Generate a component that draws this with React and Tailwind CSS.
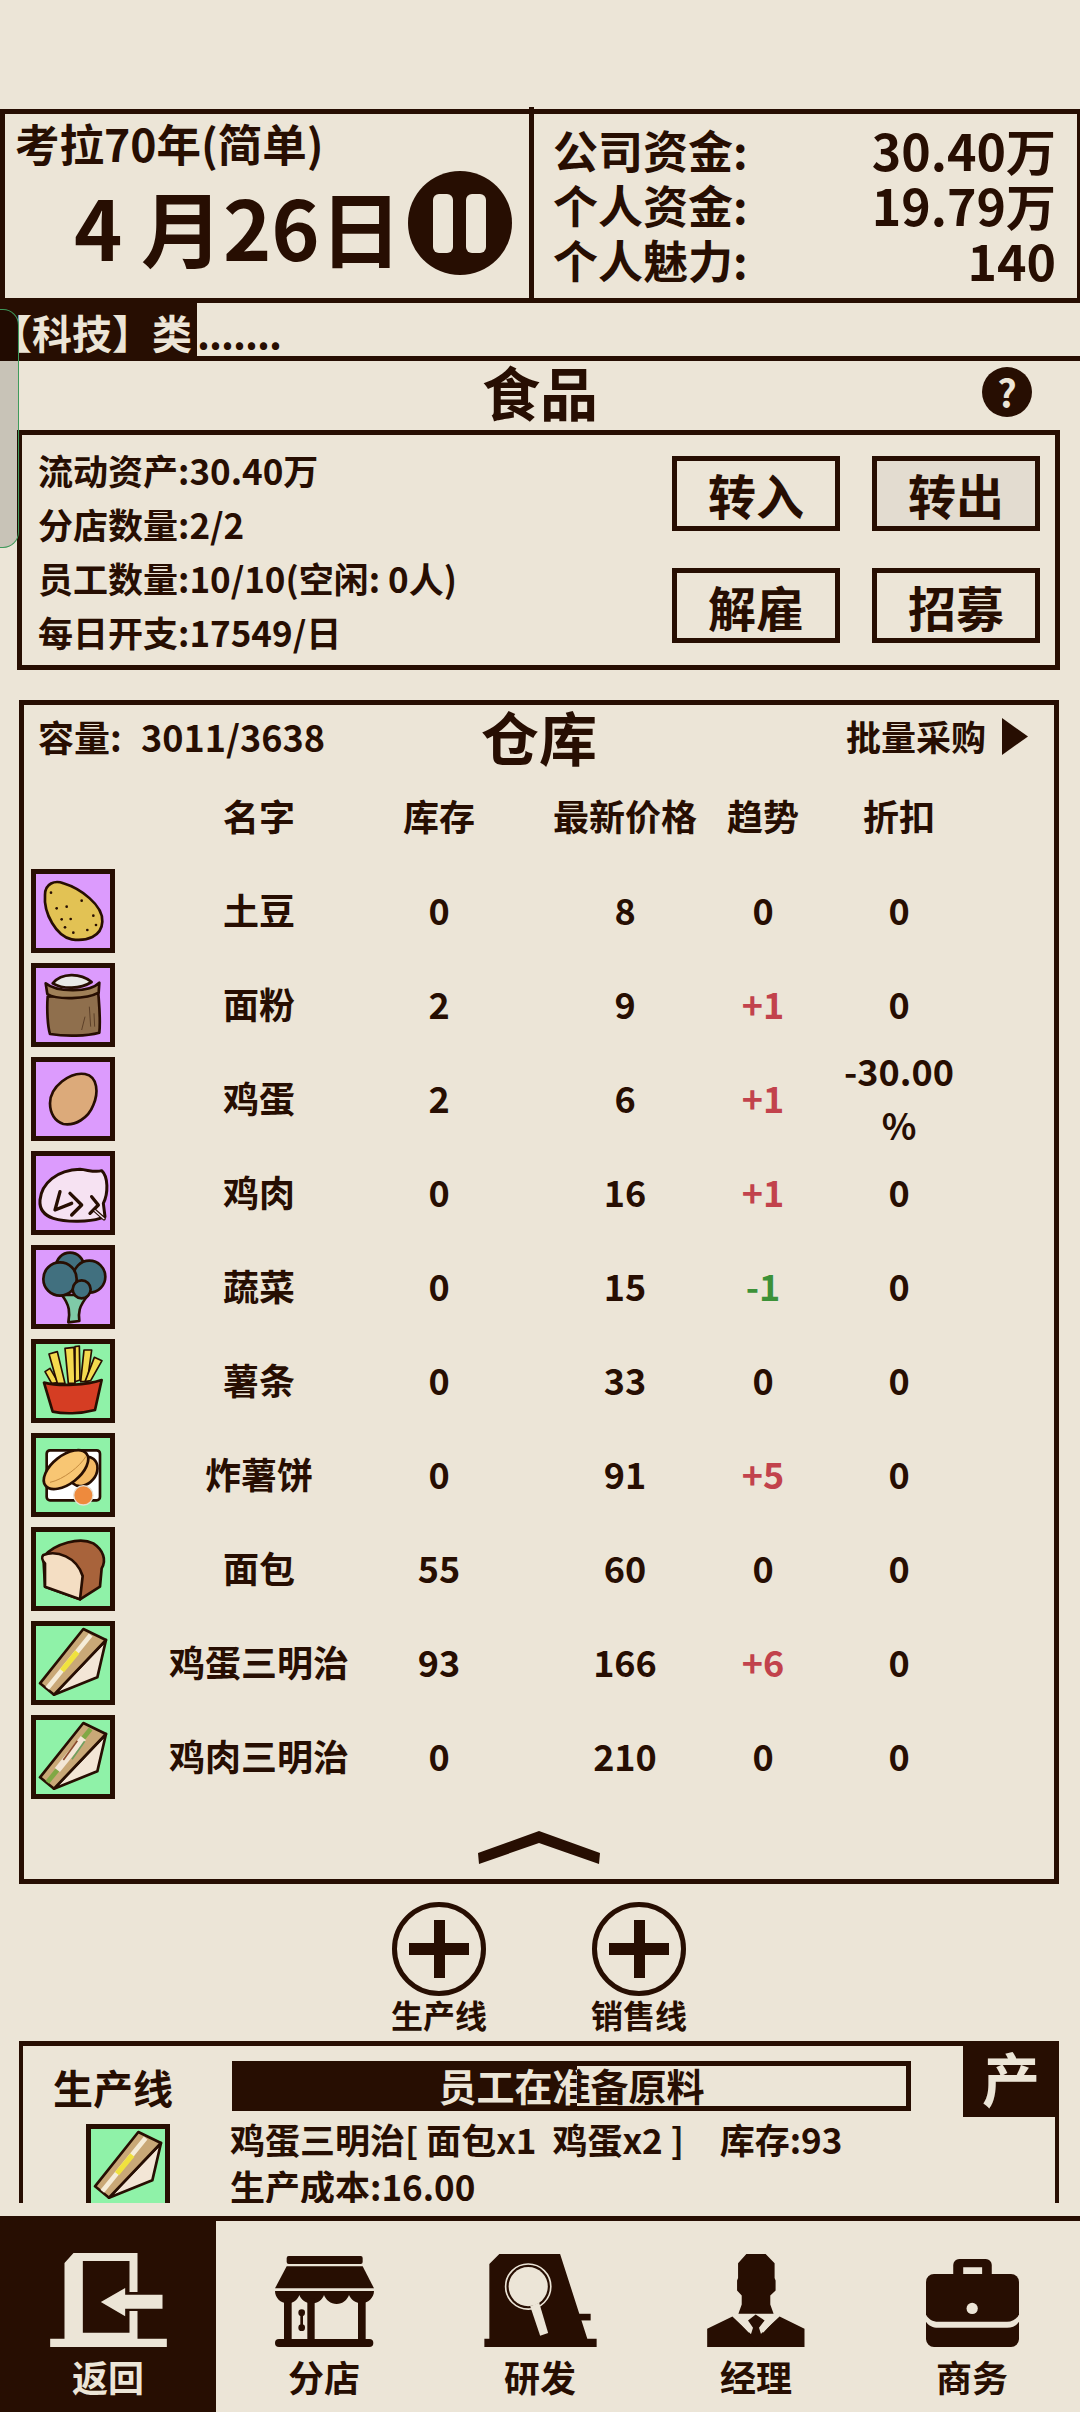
import React from 'react';

const PURPLE = 'bg-[#dc9bfd]';
const GREEN = 'bg-[#8ff2a8]';
const line = { stroke: '#270e02', strokeWidth: 8, strokeLinejoin: 'round', strokeLinecap: 'round' };

const Potato = () => (
  <svg viewBox="108 72 222 222" className="w-full h-full">
    <path d="M135 135C135 100 165 90 190 100C240 115 310 165 307 215C305 260 260 275 215 268C170 260 130 190 135 135Z" fill="#e2c254" {...line} />
    {[[153, 128], [170, 175], [200, 170], [245, 152], [185, 208], [212, 207], [280, 197], [288, 225], [195, 232], [220, 248], [262, 240]].map(([x, y]) => (
      <circle key={`${x}-${y}`} cx={x} cy={y} r="4" fill="#270e02" />
    ))}
  </svg>
);

const Flour = () => (
  <svg viewBox="108 354 222 222" className="w-full h-full">
    <path d="M143 440C140 480 143 530 150 552C200 560 260 558 298 548C302 510 298 470 295 430Z" fill="#8f6f4d" {...line} />
    <path d="M158 400C185 368 240 368 275 396C240 418 190 418 158 400Z" fill="#e9e9e6" {...line} />
    <path d="M137 400C170 428 270 428 298 398L296 428C260 448 170 450 142 432Z" fill="#a08058" {...line} />
    <path d="M268 470L272 530M255 500L245 540M282 490L284 530" stroke="#5d4029" strokeWidth="3" fill="none" />
  </svg>
);

const Egg = () => (
  <svg viewBox="108 636 222 222" className="w-full h-full">
    <path d="M150 760C150 710 210 665 255 672C295 680 295 730 280 765C265 805 225 828 190 822C165 815 150 790 150 760Z" fill="#dcaa7a" {...line} />
  </svg>
);

const Chicken = () => (
  <svg viewBox="108 918 222 222" className="w-full h-full">
    <path d="M120 1050C125 1000 170 960 240 958C265 960 285 968 305 962C325 980 325 1030 310 1060L315 1100L300 1105C270 1115 200 1118 160 1105C130 1095 118 1075 120 1050Z" fill="#f6e2f2" {...line} strokeWidth="9" />
    <path d="M180 1025L165 1080L215 1060M210 1030L245 1065L215 1095M275 1040L295 1065L270 1090" fill="none" {...line} strokeWidth="10" />
    <path d="M285 1082L312 1106" stroke="#270e02" strokeWidth="11" strokeLinecap="round" />
    <path d="M285 1082L312 1106" stroke="#f6e2f2" strokeWidth="4" strokeLinecap="round" />
  </svg>
);

const Broccoli = () => (
  <svg viewBox="48 45 222 222" className="w-full h-full">
    <path d="M125 180C150 210 150 235 145 262L178 258C175 235 175 215 205 180Z" fill="#7fcaa8" {...line} />
    <circle cx="150" cy="95" r="42" fill="#41707f" {...line} />
    <circle cx="208" cy="125" r="48" fill="#41707f" {...line} />
    <circle cx="120" cy="132" r="50" fill="#41707f" {...line} />
    <circle cx="185" cy="163" r="27" fill="#41707f" {...line} />
  </svg>
);

const Fries = () => (
  <svg viewBox="108 42 222 222" className="w-full h-full">
    {[
      '135 125 150 115 175 158 155 160',
      '147 72 172 65 195 160 172 160',
      '195 55 222 52 225 160 205 160',
      '225 50 238 48 240 150 225 155',
      '252 60 275 60 262 155 242 155',
      '283 82 306 92 272 152 255 155',
    ].map((p) => (
      <polygon key={p} points={p} fill="#f4da4e" stroke="#270e02" strokeWidth="5" strokeLinejoin="round" />
    ))}
    <path d="M132 158C180 170 260 165 305 150L285 240C240 252 190 252 158 245Z" fill="#d53d23" {...line} />
  </svg>
);

const Hash = () => (
  <svg viewBox="108 325 222 222" className="w-full h-full">
    <rect x="140" y="362" width="160" height="150" rx="10" fill="#fff" {...line} />
    <ellipse cx="250" cy="425" rx="48" ry="38" transform="rotate(-50 250 425)" fill="#f3b964" {...line} />
    <ellipse cx="198" cy="420" rx="78" ry="42" transform="rotate(-38 198 420)" fill="#f8c673" {...line} />
    <path d="M150 458C190 450 240 410 258 380" fill="none" stroke="#c58b3f" strokeWidth="3" />
    <circle cx="250" cy="497" r="29" fill="#ee8a3d" stroke="#e6dfd2" strokeWidth="4" />
  </svg>
);

const Bread = () => (
  <svg viewBox="108 606 222 222" className="w-full h-full">
    <path d="M130 680C165 640 240 620 280 640C310 660 320 690 305 715L300 770L240 808L135 770Z" fill="#a8633b" {...line} />
    <path d="M130 675C170 660 230 680 248 738L240 808L135 770L135 700C125 690 125 680 130 675Z" fill="#f4dec3" {...line} />
  </svg>
);

const EggSandwich = () => (
  <svg viewBox="108 888 222 222" className="w-full h-full">
    <polygon points="318,930 292,1042 162,1094" fill="#f3e6d6" {...line} />
    <polygon points="250,897 318,930 162,1094 120,1060" fill="#c9a877" {...line} />
    <path d="M272 915L142 1075" stroke="#f5ecd8" strokeWidth="14" />
    <path d="M232 966L186 1022" stroke="#f0e23e" strokeWidth="16" />
  </svg>
);

const ChickenSandwich = () => (
  <svg viewBox="108 1170 222 222" className="w-full h-full">
    <polygon points="318,1212 292,1324 162,1376" fill="#f3e6d6" {...line} />
    <polygon points="250,1179 318,1212 162,1376 120,1342" fill="#c9a877" {...line} />
    <path d="M272 1197L142 1357" stroke="#7fa845" strokeWidth="14" />
    <path d="M250 1224L172 1320" stroke="#f3e6d6" strokeWidth="20" />
    <path d="M232 1232L190 1290" stroke="#8a4a2c" strokeWidth="5" />
    <path d="M254 1234L216 1288" stroke="#6fa060" strokeWidth="5" />
  </svg>
);

const items = [
  { name: '土豆', stock: '0', price: '8', trend: '0', off: '0', bg: PURPLE, icon: Potato },
  { name: '面粉', stock: '2', price: '9', trend: '+1', off: '0', bg: PURPLE, icon: Flour },
  { name: '鸡蛋', stock: '2', price: '6', trend: '+1', off: '-30.00 %', bg: PURPLE, icon: Egg },
  { name: '鸡肉', stock: '0', price: '16', trend: '+1', off: '0', bg: PURPLE, icon: Chicken },
  { name: '蔬菜', stock: '0', price: '15', trend: '-1', off: '0', bg: PURPLE, icon: Broccoli },
  { name: '薯条', stock: '0', price: '33', trend: '0', off: '0', bg: GREEN, icon: Fries },
  { name: '炸薯饼', stock: '0', price: '91', trend: '+5', off: '0', bg: GREEN, icon: Hash },
  { name: '面包', stock: '55', price: '60', trend: '0', off: '0', bg: GREEN, icon: Bread },
  { name: '鸡蛋三明治', stock: '93', price: '166', trend: '+6', off: '0', bg: GREEN, icon: EggSandwich },
  { name: '鸡肉三明治', stock: '0', price: '210', trend: '0', off: '0', bg: GREEN, icon: ChickenSandwich },
];

const trendColor = (t) => {
  if (t.startsWith('+')) return 'text-[#c2424c]';
  if (t.startsWith('-')) return 'text-[#3c9138]';
  return '';
};

const ItemIcon = ({ bg, icon: Icon }) => (
  <div className={`w-[84px] h-[84px] shrink-0 border-[5px] border-[#270e02] ${bg}`}>
    <Icon />
  </div>
);

const Row = ({ first, name, stock, price, trend, off, trendClass = '' }) => (
  <div className="flex items-center h-[84px] mb-[10px] pl-[7px] text-[36px] leading-[54px] text-center font-bold">
    <div className="w-[84px] shrink-0">{first}</div>
    <div className="w-[288px] shrink-0 -mt-[4px] whitespace-nowrap">{name}</div>
    <div className="w-[72px] shrink-0 -mt-[4px]">{stock}</div>
    <div className="w-[204px] shrink-0 -mt-[4px] ml-[48px] whitespace-nowrap">{price}</div>
    <div className={`w-[72px] shrink-0 -mt-[4px] ${trendClass}`}>{trend}</div>
    <div className="w-[120px] shrink-0 -mt-[4px] ml-[40px]">{off}</div>
  </div>
);

const ActionButton = ({ label, pressed }) => (
  <div className={`h-[75px] border-[5px] border-[#270e02] flex items-center justify-center text-[48px] leading-[56px] font-bold ${pressed ? 'bg-[#e3dcd0]' : ''}`}>
    {label}
  </div>
);

const PlusButton = ({ label }) => (
  <div className="w-[120px] flex flex-col items-center">
    <div className="relative w-[94px] h-[94px] rounded-full border-[5px] border-[#270e02] flex items-center justify-center">
      <div className="w-[60px] h-[12px] bg-[#270e02]" />
      <div className="absolute w-[11px] h-[58px] bg-[#270e02]" />
    </div>
    <div className="h-[42px] leading-[36px] text-[32px] font-bold whitespace-nowrap">{label}</div>
  </div>
);

const DoorIcon = () => (
  <svg viewBox="60 38 350 282" className="w-[117px] h-[94px]" fill="#ece5d7">
    <path fillRule="evenodd" d="M103 68L130 38H322V155H298V62H158V277H298V212H322V295H410V320H60V295H103Z" />
    <path d="M212 185L285 143V163H397V205H285V228Z" />
  </svg>
);

const ShopIcon = () => (
  <svg viewBox="733 43 297 273" className="w-[99px] h-[91px]" fill="#270e02">
    <rect x="768" y="43" width="228" height="24" rx="6" />
    <path d="M768 74H996L1030 140H733Z" />
    <path d="M733 148H1030C1030 168 1012 185 992 185C974 185 960 172 955 160C950 174 936 187 918 187C900 187 885 174 880 160C875 174 862 185 843 185C826 185 811 174 806 160C801 174 788 185 770 185C750 185 733 168 733 148Z" />
    <rect x="760" y="170" width="23" height="125" />
    <rect x="830" y="170" width="22" height="125" />
    <rect x="982" y="170" width="23" height="125" />
    <rect x="733" y="292" width="295" height="24" rx="12" />
    <circle cx="813" cy="213" r="10" />
    <circle cx="813" cy="258" r="10" />
    <rect x="809" y="213" width="8" height="45" />
  </svg>
);

const ResearchIcon = () => (
  <svg viewBox="40 40 338 280" className="w-[113px] h-[93px]" fill="#270e02">
    <path d="M85 40H268L350 295H378V320H40V295H55V70Z" />
    <rect x="325" y="220" width="35" height="20" />
    <circle cx="172" cy="138" r="68" fill="none" stroke="#ece5d7" strokeWidth="5" />
    <circle cx="172" cy="138" r="59" fill="#ece5d7" />
    <polygon points="178,197 205,187 232,278 208,286" fill="#ece5d7" />
  </svg>
);

const ManagerIcon = () => (
  <svg viewBox="712 40 294 280" className="w-[98px] h-[93px]" fill="#270e02">
    <path d="M830 40H888L915 68V112L918 120V150L902 165V192L912 220H806L816 192V165L802 150V120L805 112V68Z" />
    <path d="M712 265L788 228L845 282L858 262L872 282L930 228L1005 265V320H712Z" />
    <path d="M858 222L885 240L868 262L880 300L858 320L838 300L850 262L835 240Z" />
    <path d="M800 226L842 272M918 226L876 272" stroke="#ece5d7" strokeWidth="14" fill="none" />
  </svg>
);

const CaseIcon = () => (
  <svg viewBox="76 43 280 265" className="w-[93px] h-[88px]" fill="#270e02">
    <path fillRule="evenodd" d="M176 43H256A18 18 0 0 1 274 61V90H245V68H188V90H158V61A18 18 0 0 1 176 43Z" />
    <path d="M100 88H332A24 24 0 0 1 356 112V210C350 224 335 232 320 232H112C97 232 82 224 76 210V112A24 24 0 0 1 100 88Z" />
    <path d="M76 232C84 245 97 250 112 250H320C335 250 348 245 356 232V285A24 24 0 0 1 332 308H100A24 24 0 0 1 76 285Z" />
    <circle cx="215" cy="192" r="17" fill="#ece5d7" />
  </svg>
);

const tabs = [
  { label: '返回', icon: DoorIcon, active: true },
  { label: '分店', icon: ShopIcon },
  { label: '研发', icon: ResearchIcon },
  { label: '经理', icon: ManagerIcon },
  { label: '商务', icon: CaseIcon },
];

const App = () => {
  return (
    <div className="relative w-[1080px] h-[2412px] overflow-hidden bg-[#ece5d7] text-[#270e02] font-['Noto_Sans_CJK_SC','Noto_Sans',sans-serif]">
      {/* system gesture handle on the left edge */}
      <div className="absolute left-0 top-[309px] w-[19px] h-[239px] rounded-r-[16px] border border-l-0 border-[#3f9a5c] bg-[#000000]/15 z-10" />

      <div className="h-[2203px] pt-[109px] overflow-hidden">
        {/* date + money header */}
        <div className="flex h-[194px] border-y-[5px] border-l-[5px] border-r-[3px] border-[#270e02]">
          <div className="w-[524px] shrink-0">
            <div className="pl-[10px] pt-[3px] h-[57px] leading-[51px] text-[44.5px] font-bold whitespace-nowrap">考拉70年(简单)</div>
            <div className="flex items-center h-[104px] pl-[69px]">
              <div className="mt-[6px] text-[82px] leading-[90px] font-bold whitespace-nowrap">4 月26日</div>
              <div className="ml-[6px] w-[104px] h-[104px] rounded-full bg-[#270e02] flex items-center justify-center gap-[13px]">
                <div className="w-[20px] h-[59px] rounded-[6px] bg-[#ece5d7]" />
                <div className="w-[20px] h-[59px] rounded-[6px] bg-[#ece5d7]" />
              </div>
            </div>
          </div>
          <div className="w-[5px] -mt-[7px] -mb-[5px] bg-[#270e02]" />
          <div className="flex-1 pl-[19px] pr-[21px] pt-[8px] text-[45px] leading-[55px] font-bold">
            <div className="flex justify-between items-center h-[55px]"><span>公司资金:</span><span className="text-[50px] leading-[55px]">30.40万</span></div>
            <div className="flex justify-between items-center h-[55px]"><span>个人资金:</span><span className="text-[50px] leading-[55px]">19.79万</span></div>
            <div className="flex justify-between items-center h-[55px]"><span>个人魅力:</span><span className="text-[50px] leading-[55px]">140</span></div>
          </div>
        </div>

        {/* news ticker */}
        <div className="flex h-[58px] border-b-[5px] border-[#270e02] text-[40px] leading-[58px] font-bold whitespace-nowrap">
          <div className="w-[197px] shrink-0 overflow-hidden bg-[#270e02] text-[#ece5d7]">
            <div className="-ml-[8px]">【科技】类</div>
          </div>
          <div className="tracking-[-1px]">.......</div>
        </div>

        {/* title */}
        <div className="grid grid-cols-[1fr_auto_1fr] items-center h-[69px] pb-[8px]">
          <div />
          <div className="text-[58px] leading-[61px] font-bold">食品</div>
          <div className="flex justify-end pr-[48px]">
            <div className="w-[50px] h-[50px] rounded-full bg-[#270e02] text-[#ece5d7] flex items-center justify-center text-[38px] leading-none font-bold">?</div>
          </div>
        </div>

        {/* shop summary */}
        <div className="ml-[17px] w-[1043px] h-[240px] border-[5px] border-[#270e02] flex justify-between">
          <div className="pl-[16px] pt-[8px] text-[35px] leading-[54px] font-bold whitespace-nowrap">
            <div>流动资产:30.40万</div>
            <div>分店数量:2/2</div>
            <div>员工数量:10/10(空闲: 0人)</div>
            <div>每日开支:17549/日</div>
          </div>
          <div className="pt-[21px] pr-[15px] grid grid-cols-[168px_168px] gap-x-[32px] gap-y-[37px] content-start">
            <ActionButton label="转入" />
            <ActionButton label="转出" pressed />
            <ActionButton label="解雇" />
            <ActionButton label="招募" />
          </div>
        </div>

        {/* warehouse */}
        <div className="ml-[19px] mt-[30px] w-[1040px] h-[1184px] border-[5px] border-[#270e02]">
          <div className="grid grid-cols-[1fr_auto_1fr] items-center h-[70px] pb-[8px] font-bold">
            <div className="pl-[14px] text-[36px] leading-[54px] whitespace-nowrap">容量:&nbsp;&nbsp;<span className="ml-[3px]">3011/3638</span></div>
            <div className="text-[58px] leading-[62px]">仓库</div>
            <div className="flex justify-end items-center gap-[16px] pr-[26px] text-[35px] leading-[54px] whitespace-nowrap">
              <span>批量采购</span>
              <svg viewBox="0 0 26 37" className="w-[26px] h-[37px]" fill="#270e02">
                <polygon points="0,0 26,18.5 0,37" />
              </svg>
            </div>
          </div>
          <Row name="名字" stock="库存" price="最新价格" trend="趋势" off="折扣" />
          {items.map((item) => (
            <Row
              key={item.name}
              first={<ItemIcon bg={item.bg} icon={item.icon} />}
              name={item.name}
              stock={item.stock}
              price={item.price}
              trend={item.trend}
              trendClass={trendColor(item.trend)}
              off={item.off}
            />
          ))}
          <div className="flex justify-center mt-[32px]">
            <svg viewBox="0 0 122 33" className="w-[122px] h-[33px]" fill="#270e02">
              <polygon points="61,0 122,22 121,33 61,12 1,33 0,22" />
            </svg>
          </div>
        </div>

        {/* add line buttons */}
        <div className="flex justify-center gap-[80px] mt-[18px] pr-[2px]">
          <PlusButton label="生产线" />
          <PlusButton label="销售线" />
        </div>

        {/* production line */}
        <div className="relative ml-[19px] mt-[3px] w-[1040px] h-[200px] flex border-t-[5px] border-x-[4px] border-[#270e02]">
          <div className="absolute -top-[5px] -right-[4px] w-[96px] h-[76px] pb-[4px] bg-[#270e02] text-[#ece5d7] flex items-center justify-center text-[58px] leading-[64px] font-bold">产</div>
          <div className="w-[207px] shrink-0">
            <div className="pl-[30px] mt-[18px] h-[48px] leading-[46px] text-[40px] font-bold">生产线</div>
            <div className="ml-[63px] mt-[12px]">
              <ItemIcon bg={GREEN} icon={EggSandwich} />
            </div>
          </div>
          <div className="flex-1 text-[35px] font-bold">
            <div className="relative ml-[2px] mt-[15px] w-[679px] h-[50px] pb-[2px] border-[5px] border-[#270e02] flex items-center justify-center text-[38px] leading-[40px]">
              <span className="whitespace-nowrap">员工在准备原料</span>
              <div className="absolute left-0 top-0 h-full w-[340px] pb-[2px] overflow-hidden bg-[#270e02] text-[#ece5d7]">
                <div className="w-[669px] h-full flex items-center justify-center whitespace-nowrap">员工在准备原料</div>
              </div>
            </div>
            <div className="mt-[4px] leading-[47px] whitespace-pre">鸡蛋三明治[ 面包x1  鸡蛋x2 ]   <span className="ml-[12px]">库存:93</span></div>
            <div className="leading-[47px]">生产成本:16.00</div>
          </div>
        </div>
      </div>

      {/* bottom nav */}
      <div className="mt-[13px] grid grid-cols-5 h-[196px] border-t-[5px] border-[#270e02]">
        {tabs.map((tab) => (
          <div
            key={tab.label}
            className={`flex flex-col items-center ${tab.active ? 'bg-[#270e02] text-[#ece5d7] -mt-[5px] pt-[5px]' : ''}`}
          >
            <div className="h-[126px] flex items-end justify-center">
              <tab.icon />
            </div>
            <div className="h-[66px] pb-[8px] flex items-center text-[36px] leading-[50px] font-bold">{tab.label}</div>
          </div>
        ))}
      </div>
    </div>
  );
};

export default App;
